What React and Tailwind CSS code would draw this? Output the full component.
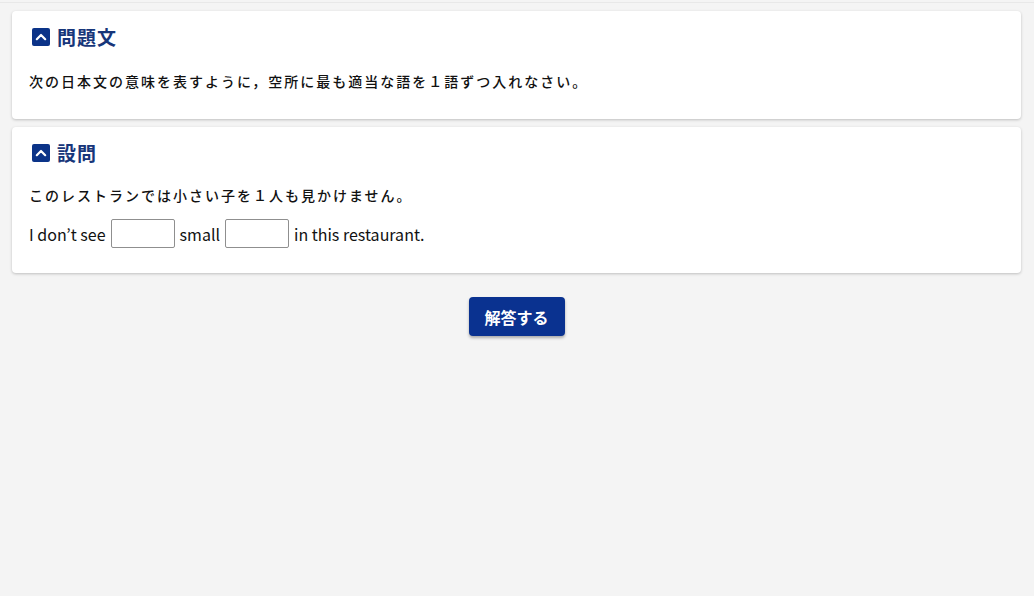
import React from "react";

const jp = { fontFamily: '"Noto Sans CJK JP", "Noto Sans", sans-serif' };

function Chevron() {
  return (
    <span className="flex h-[18px] w-[18px] items-center justify-center rounded-[2px] bg-[#0b3388]">
      <svg width="14" height="14" viewBox="0 0 14 14" fill="none">
        <path d="M2.8 9.2 L7 5 L11.2 9.2" stroke="white" strokeWidth="2.2" strokeLinecap="round" strokeLinejoin="round" />
      </svg>
    </span>
  );
}

function Header({ title }) {
  return (
    <div className="flex h-[26px] items-center gap-[7px] pl-[3px]">
      <Chevron />
      <span className="text-[19px] font-bold leading-[26px] tracking-[1px] text-[#17367a]">{title}</span>
    </div>
  );
}

function Blank() {
  return <span className="block h-[29px] w-[64px] rounded-[2px] border border-[#8f8f8f] bg-white" />;
}

export default function App() {
  return (
    <div className="min-h-[596px] w-full bg-[#f4f4f4] pt-[2px]" style={jp}>
      <div className="border-t border-[#e8e8e8] pt-[8px] pl-3 pr-[13px]">
        <div className="flex flex-col gap-2">
          <div className="rounded-[4px] bg-white px-[17px] pt-[13px] pb-[27px] shadow-[0_1px_3px_rgba(0,0,0,0.22)]">
            <Header title="問題文" />
            <p className="mt-[20px] h-[22px] text-[14px] font-medium leading-[22px] tracking-[2px] text-[#111]">
              次の日本文の意味を表すように，空所に最も適当な語を１語ずつ入れなさい。
            </p>
          </div>
          <div className="rounded-[4px] bg-white px-[17px] pt-[13px] pb-[25px] shadow-[0_1px_3px_rgba(0,0,0,0.22)]">
            <Header title="設問" />
            <p className="mt-[18px] h-[22px] text-[14px] font-medium leading-[22px] tracking-[2px] text-[#111]">
              このレストランでは小さい子を１人も見かけません。
            </p>
            <div className="mt-[13px] flex h-[29px] items-center gap-[5px] text-[16px] text-[#111]">
              <span>I don’t see</span>
              <Blank />
              <span>small</span>
              <Blank />
              <span>in this restaurant.</span>
            </div>
          </div>
        </div>
        <div className="mt-[24px] flex justify-center">
          <button className="h-[39px] w-[96px] rounded-[4px] bg-[#0a3290] text-[16px] font-bold text-white shadow-[0_2px_3px_rgba(0,0,0,0.3)]">
            解答する
          </button>
        </div>
      </div>
    </div>
  );
}
